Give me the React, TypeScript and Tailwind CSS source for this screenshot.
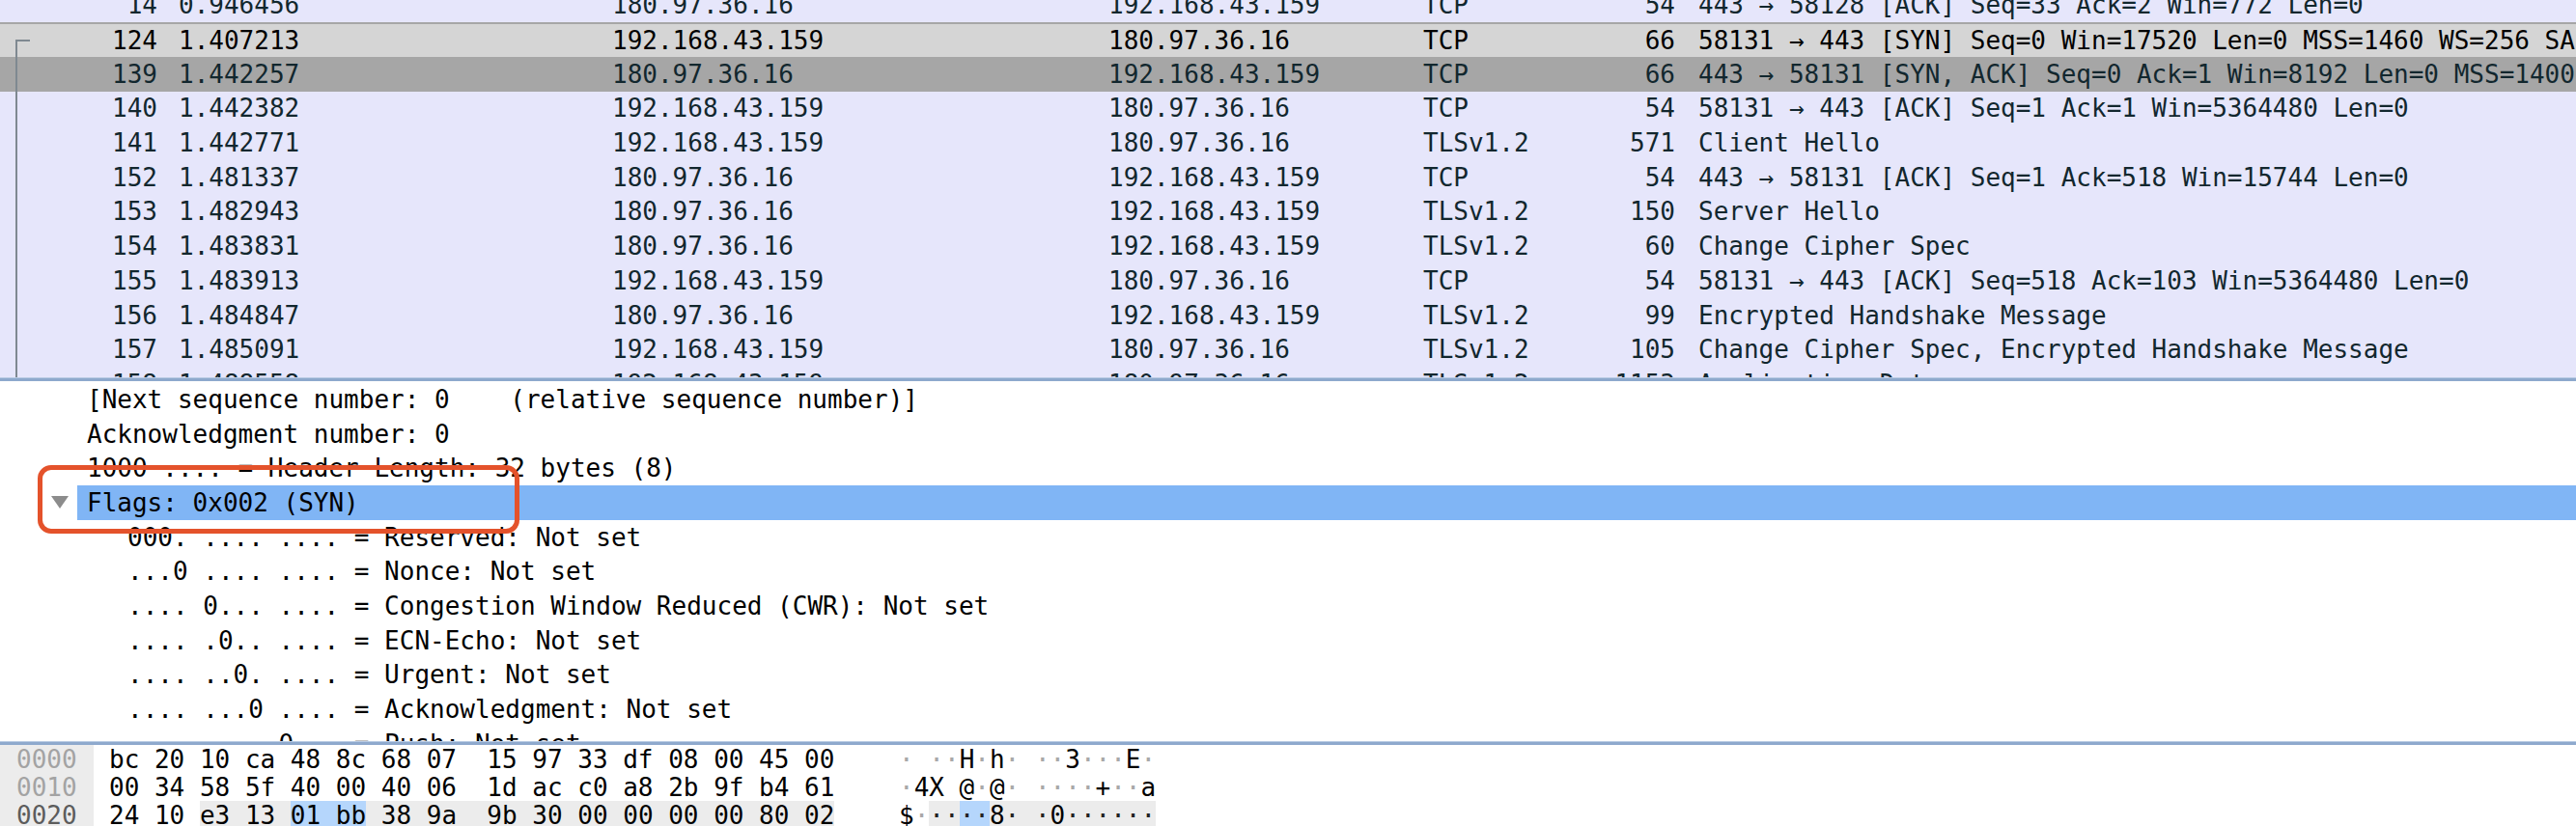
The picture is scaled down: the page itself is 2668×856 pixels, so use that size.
const packets = [
  ["14", "0.946456", "180.97.36.16", "192.168.43.159", "TCP", "54", "443 → 58128 [ACK] Seq=33 Ack=2 Win=772 Len=0"],
  ["124", "1.407213", "192.168.43.159", "180.97.36.16", "TCP", "66", "58131 → 443 [SYN] Seq=0 Win=17520 Len=0 MSS=1460 WS=256 SACK_PERM=1"],
  ["139", "1.442257", "180.97.36.16", "192.168.43.159", "TCP", "66", "443 → 58131 [SYN, ACK] Seq=0 Ack=1 Win=8192 Len=0 MSS=1400 WS=256 SACK_PERM=1"],
  ["140", "1.442382", "192.168.43.159", "180.97.36.16", "TCP", "54", "58131 → 443 [ACK] Seq=1 Ack=1 Win=5364480 Len=0"],
  ["141", "1.442771", "192.168.43.159", "180.97.36.16", "TLSv1.2", "571", "Client Hello"],
  ["152", "1.481337", "180.97.36.16", "192.168.43.159", "TCP", "54", "443 → 58131 [ACK] Seq=1 Ack=518 Win=15744 Len=0"],
  ["153", "1.482943", "180.97.36.16", "192.168.43.159", "TLSv1.2", "150", "Server Hello"],
  ["154", "1.483831", "180.97.36.16", "192.168.43.159", "TLSv1.2", "60", "Change Cipher Spec"],
  ["155", "1.483913", "192.168.43.159", "180.97.36.16", "TCP", "54", "58131 → 443 [ACK] Seq=518 Ack=103 Win=5364480 Len=0"],
  ["156", "1.484847", "180.97.36.16", "192.168.43.159", "TLSv1.2", "99", "Encrypted Handshake Message"],
  ["157", "1.485091", "192.168.43.159", "180.97.36.16", "TLSv1.2", "105", "Change Cipher Spec, Encrypted Handshake Message"],
  ["158", "1.488558", "192.168.43.159", "180.97.36.16", "TLSv1.2", "1153", "Application Data"],
];

const flagBits = [
  "000. .... .... = Reserved: Not set",
  "...0 .... .... = Nonce: Not set",
  ".... 0... .... = Congestion Window Reduced (CWR): Not set",
  ".... .0.. .... = ECN-Echo: Not set",
  ".... ..0. .... = Urgent: Not set",
  ".... ...0 .... = Acknowledgment: Not set",
  ".... .... 0... = Push: Not set",
];

function PacketRow({ p }: { p: string[] }) {
  const [no, time, src, dst, proto, len, info] = p;
  let cls = "";
  if (no === "124") cls = "bg-[#d5d5d5] text-black border-t-2 border-[#a6a6a6]";
  if (no === "139") cls = "bg-[#a6a6a6]";
  return (
    <div className={`flex h-[35.7px] items-center whitespace-pre ${cls}`}>
      <span className="w-[163px] shrink-0 text-right">{no}</span>
      <span className="ml-[22px] w-[449px] shrink-0">{time}</span>
      <span className="w-[514px] shrink-0">{src}</span>
      <span className="w-[326px] shrink-0">{dst}</span>
      <span className="w-[170px] shrink-0">{proto}</span>
      <span className="w-[91px] shrink-0 text-right">{len}</span>
      <span className="ml-[24px] shrink-0">{info}</span>
    </div>
  );
}

function HexRow({ offset, dark, children }: { offset: string; dark?: boolean; children: React.ReactNode }) {
  return (
    <div className="flex h-[29px] items-center whitespace-pre">
      <div className={`flex h-full w-[97px] shrink-0 items-center bg-[#ececec] pl-[17px] ${dark ? "text-[#5c5c5c]" : "text-[#a3a3a3]"}`}>
        {offset}
      </div>
      {children}
    </div>
  );
}

const Dot = ({ dark }: { dark?: boolean }) => <span className={dark ? "text-[#222]" : "text-[#a8a8a8]"}>·</span>;

export default function App() {
  return (
    <div className="h-[856px] w-[2668px] overflow-hidden bg-white font-['DejaVu_Sans_Mono',monospace] text-[26px] leading-none">
      {/* packet list */}
      <div className="relative h-[391px] overflow-hidden bg-[#e6e6fb] text-[#12272e]">
        <div className="-mt-[12.5px]">
          {packets.map((p) => (
            <PacketRow key={p[0]} p={p} />
          ))}
        </div>
        <div className="absolute top-[41px] bottom-0 left-[16px] w-[2px] bg-[#7f8991]" />
        <div className="absolute top-[41px] left-[16px] h-[2px] w-[15px] bg-[#7f8991]" />
      </div>
      <div className="h-[4px] border-t border-[#b9cbe3] bg-[#8ea9cd]" />

      {/* packet details */}
      <div className="relative h-[373px] overflow-hidden pt-[1px] text-black">
        <div className="flex h-[35.7px] items-center whitespace-pre pl-[90px]">
          [Next sequence number: 0    (relative sequence number)]
        </div>
        <div className="flex h-[35.7px] items-center whitespace-pre pl-[90px]">Acknowledgment number: 0</div>
        <div className="flex h-[35.7px] items-center whitespace-pre pl-[90px]">1000 .... = Header Length: 32 bytes (8)</div>
        <div className="flex h-[35.7px] items-center">
          <div className="flex w-[80px] shrink-0 items-center pl-[53px]">
            <svg width="18" height="13" viewBox="0 0 18 13">
              <polygon points="0,0 18,0 9,13" fill="#8c8c8c" />
            </svg>
          </div>
          <div className="flex h-full flex-1 items-center whitespace-pre bg-[#80b5f5] pl-[10px]">Flags: 0x002 (SYN)</div>
        </div>
        {flagBits.map((t) => (
          <div key={t} className="flex h-[35.7px] items-center whitespace-pre pl-[132px]">
            {t}
          </div>
        ))}
        <div className="absolute top-[87px] left-[39px] h-[71px] w-[499px] rounded-[14px] border-[5px] border-[#e4522b]" />
      </div>
      <div className="h-[4px] border-t border-[#b9cbe3] bg-[#8ea9cd]" />

      {/* bytes */}
      <div className="h-[84px] overflow-hidden text-black">
        <HexRow offset="0000">
          <span className="ml-[16px] w-[818px] shrink-0">bc 20 10 ca 48 8c 68 07  15 97 33 df 08 00 45 00</span>
          <span>
            <Dot /> <Dot />
            <Dot />H<Dot />h<Dot /> <Dot />
            <Dot />3<Dot />
            <Dot />
            <Dot />E<Dot />
          </span>
        </HexRow>
        <HexRow offset="0010">
          <span className="ml-[16px] w-[818px] shrink-0">00 34 58 5f 40 00 40 06  1d ac c0 a8 2b 9f b4 61</span>
          <span>
            <Dot />4X_@<Dot />@<Dot /> <Dot />
            <Dot />
            <Dot />
            <Dot />+<Dot />
            <Dot />a
          </span>
        </HexRow>
        <HexRow offset="0020" dark>
          <span className="ml-[16px] w-[818px] shrink-0">
            <span>24 10 </span>
            <span className="bg-[#ececec]">e3 13 </span>
            <span className="bg-[#b5d6fc]">01 bb</span>
            <span className="bg-[#ececec]"> 38 9a  9b 30 00 00 00 00 80 02</span>
          </span>
          <span>
            <span>$</span>
            <Dot />
            <span className="bg-[#ececec]">
              <Dot dark />
              <Dot dark />
            </span>
            <span className="bg-[#b5d6fc]">
              <Dot dark />
              <Dot dark />
            </span>
            <span className="bg-[#ececec]">
              8<Dot dark /> <Dot dark />0<Dot dark />
              <Dot dark />
              <Dot dark />
              <Dot dark />
              <Dot dark />
              <Dot dark />
            </span>
          </span>
        </HexRow>
      </div>
    </div>
  );
}
